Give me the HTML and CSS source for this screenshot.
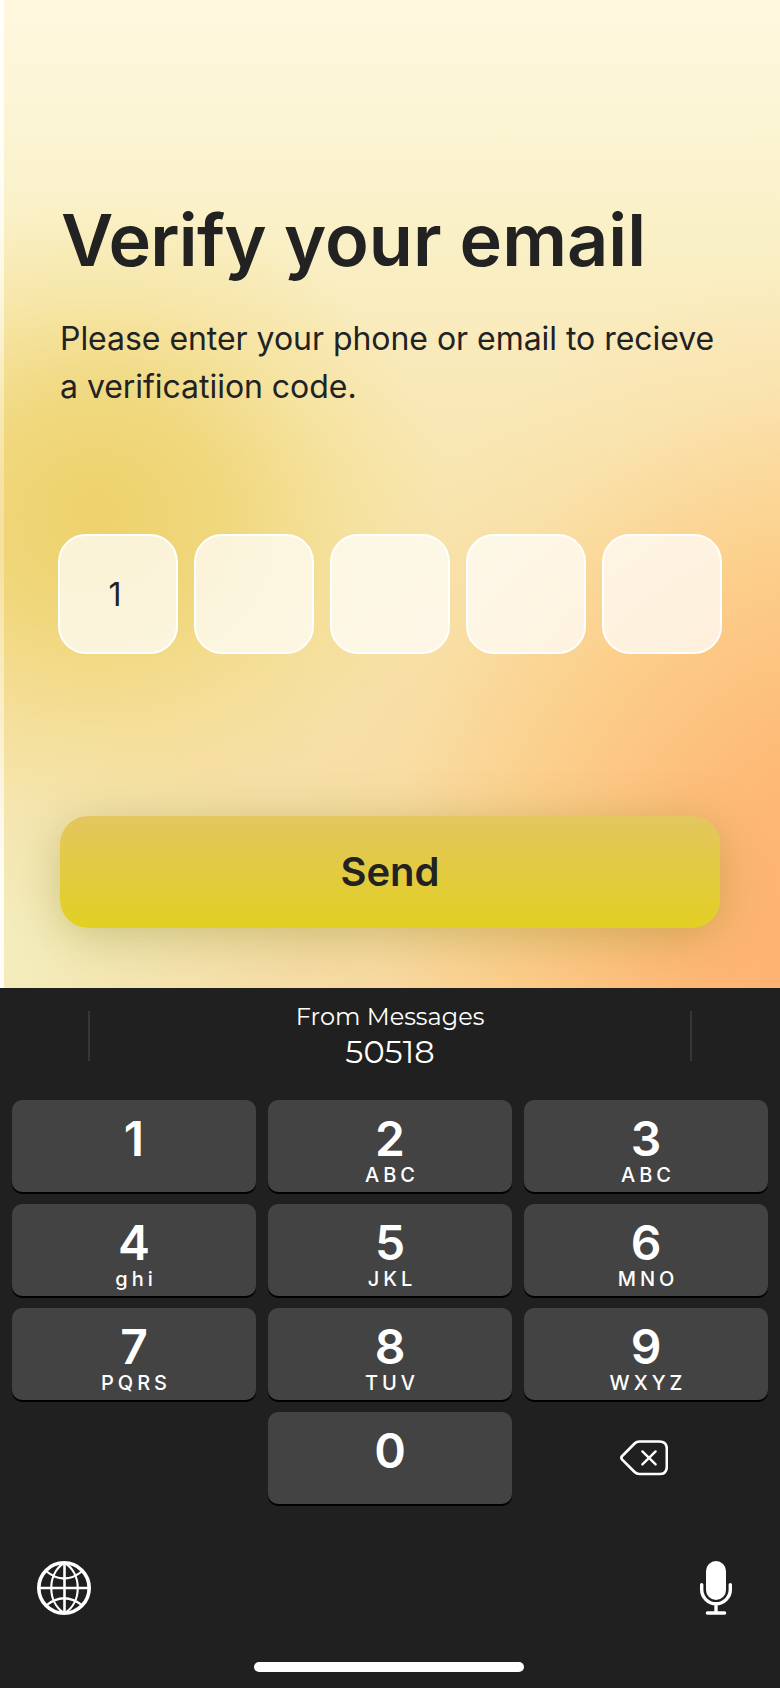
FILE: index.html
```html
<!DOCTYPE html>
<html lang="en">
<head>
<meta charset="utf-8">
<title>Verify your email</title>
<link rel="stylesheet" href="styles.css">
</head>
<body>
<main class="screen">
  <section class="verify">
    <h1 class="title"><span class="tight">Verify</span> your email</h1>
    <p class="lead">Please enter your phone or email to recieve<br>a verificatiion code.</p>
    <div class="code">
      <div class="cell">1</div>
      <div class="cell"></div>
      <div class="cell"></div>
      <div class="cell"></div>
      <div class="cell"></div>
    </div>
    <button class="send">Send</button>
  </section>
  <section class="keyboard">
    <div class="suggest">
      <span class="divider"></span>
      <div class="suggestion">
        <span class="source">From Messages</span>
        <span class="otp">50518</span>
      </div>
      <span class="divider"></span>
    </div>
    <div class="keys">
      <div class="key"><b class="digit">1</b></div>
      <div class="key"><b class="digit">2</b><span class="letters">ABC</span></div>
      <div class="key"><b class="digit">3</b><span class="letters">ABC</span></div>
      <div class="key"><b class="digit">4</b><span class="letters">ghi</span></div>
      <div class="key"><b class="digit">5</b><span class="letters">JKL</span></div>
      <div class="key"><b class="digit">6</b><span class="letters">MNO</span></div>
      <div class="key"><b class="digit">7</b><span class="letters">PQRS</span></div>
      <div class="key"><b class="digit">8</b><span class="letters">TUV</span></div>
      <div class="key"><b class="digit">9</b><span class="letters">WXYZ</span></div>
      <div class="blank"></div>
      <div class="key"><b class="digit">0</b></div>
      <div class="backspace">
        <svg width="48" height="36" viewBox="0 0 48 36" fill="none" stroke="#fff" stroke-linecap="round" stroke-linejoin="round">
          <path stroke-width="2.6" d="M19.5 1.500H39.5Q46.8 1.500 46.8 8.9V26.7Q46.8 34 39.5 34H19.5Q16.6 34 14.6 32L2.2 19.6Q.5 17.8 2.2 16L14.6 3.500Q16.6 1.500 19.5 1.500Z"/>
          <path stroke-width="2.4" d="M22.400 11.400L35.600 24.400M35.600 11.400L22.400 24.400"/>
        </svg>
      </div>
    </div>
    <div class="tools">
      <svg width="54" height="54" viewBox="0 0 54 54" fill="none" stroke="#fff">
        <circle cx="27" cy="27" r="25.2" stroke-width="3.6"/>
        <path stroke-width="2.6" d="M27.500 2V52M2 27H52"/>
        <path stroke-width="2.2" d="M27 2C10 13 10 41 27 52M28 2C45 13 45 41 28 52M9 10Q27 25 45.500 10M9 44.500Q27 30 45.500 44.500"/>
      </svg>
      <svg width="32" height="54" viewBox="0 0 32 54" fill="none" stroke="#fff" stroke-linecap="round">
        <rect x="6" y="0" width="20" height="39" rx="10" fill="#fff" stroke="none"/>
        <path stroke-width="3.4" d="M1.700 23.600V28.500A14.300 14.300 0 0 0 30.300 28.500V23.600M16 43V51M7.400 52H24.600"/>
      </svg>
    </div>
    <div class="home"></div>
  </section>
</main>
</body>
</html>
```
FILE: styles.css
```css
* { box-sizing: border-box; }

body {
  margin: 0;
  font-family: Inter, "Liberation Sans", sans-serif;
  color: #222;
}

.screen {
  width: 780px;
  height: 1688px;
  display: flex;
  flex-direction: column;
}

.verify {
  height: 988px;
  padding: 196px 58px 0;
  background:
    linear-gradient(#fffffb 0%, rgba(255, 255, 250, .85) 20%, rgba(255, 250, 240, .45) 40%, rgba(255, 240, 210, .4) 55%, rgba(255, 248, 235, .65) 75%, #fffdf6 90%) 0 0 / 4px 100% no-repeat,
    radial-gradient(ellipse 350px 310px at 95px 510px, rgba(237, 207, 100, .9) 0%, rgba(237, 210, 105, .72) 35%, rgba(240, 218, 120, .32) 70%, rgba(242, 228, 150, 0) 100%),
    radial-gradient(ellipse 560px 700px at 850px 960px, #ffae70 0%, rgba(255, 180, 112, .88) 30%, rgba(255, 195, 120, .6) 60%, rgba(255, 212, 150, .22) 84%, rgba(255, 225, 165, 0) 100%),
    radial-gradient(ellipse 300px 250px at 0 950px, rgba(243, 240, 192, .9), rgba(243, 235, 175, 0)),
    linear-gradient(#fff7df 0%, #fcf5d6 10%, #faf1c8 22%, #f9eabb 35%, #f7e2a8 60%, #f6dca5 100%);
}

.title {
  margin: 0 0 0 3px;
  font-size: 72px;
  line-height: 88px;
  font-weight: 600;
  white-space: nowrap;
}

.tight { letter-spacing: -.75px; }

.lead {
  margin: 31px 0 0 2px;
  font-size: 32px;
  line-height: 48px;
  letter-spacing: -.04px;
  white-space: nowrap;
}

.code {
  display: flex;
  gap: 16px;
  margin-top: 123px;
}

.cell {
  width: 120px;
  height: 120px;
  display: flex;
  align-items: center;
  justify-content: center;
  padding-right: 6px;
  border: 2px solid #fff;
  border-radius: 28px;
  background: rgba(255, 255, 255, .72);
  font-size: 32px;
}

.send {
  display: block;
  width: 660px;
  height: 112px;
  margin: 162px 0 0 2px;
  padding: 0 0 1px;
  border: 0;
  border-radius: 28px;
  background: linear-gradient(#e3c65f, #e1d022);
  box-shadow: 0 8px 48px rgba(128, 128, 24, .36);
  color: #222;
  font: 600 40px Inter, "Liberation Sans", sans-serif;
}

.keyboard {
  height: 700px;
  background: #202020;
  color: #fff;
}

.suggest {
  height: 112px;
  padding: 23px 88px 0;
  display: flex;
  justify-content: space-between;
}

.divider {
  width: 2px;
  height: 50px;
  background: #363636;
}

.suggestion {
  display: flex;
  flex-direction: column;
  align-items: center;
  margin-top: -10px;
  font-family: Montserrat, Inter, sans-serif;
  font-weight: 400;
}

.source {
  font-size: 24px;
  line-height: 32px;
}

.otp {
  font-size: 32px;
  line-height: 38px;
}

.keys {
  display: grid;
  grid-template-columns: repeat(3, 244px);
  grid-auto-rows: 92px;
  gap: 12px;
  padding: 0 12px;
}

.key {
  display: flex;
  flex-direction: column;
  align-items: center;
  padding-top: 15px;
  border-radius: 10px;
  background: #434343;
  box-shadow: 0 2px 0 #000;
}

.digit {
  font-size: 48px;
  line-height: 48px;
  font-weight: 600;
}

.letters {
  margin-right: -4px;
  font-size: 20px;
  line-height: 24px;
  font-weight: 500;
  letter-spacing: 4px;
}

.backspace {
  padding: 28px 0 0 96px;
}

.tools {
  display: flex;
  justify-content: space-between;
  padding: 57px 48px 0 37px;
}

.tools svg, .backspace svg { display: block; }

.home {
  width: 270px;
  height: 10px;
  margin: 47px 0 0 254px;
  border-radius: 5px;
  background: #fff;
}
```
